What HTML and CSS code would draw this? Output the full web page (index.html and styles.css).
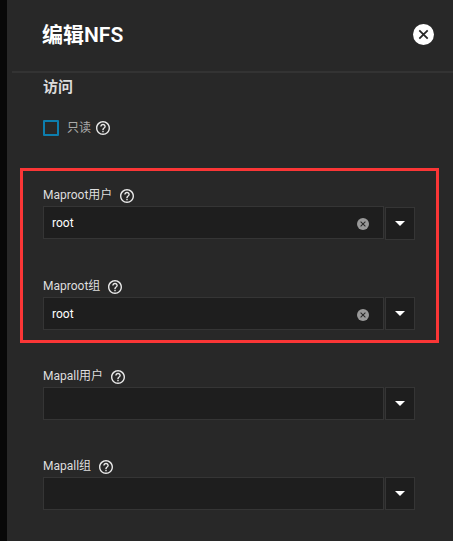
FILE: index.html
```html
<!DOCTYPE html>
<html lang="zh-CN">
<head>
<meta charset="utf-8">
<title>编辑NFS</title>
<link rel="stylesheet" href="styles.css">
</head>
<body>
<svg class="defs" aria-hidden="true">
  <symbol id="help" viewBox="2 2 20 20"><path d="M11 18h2v-2h-2v2zm1-16C6.48 2 2 6.48 2 12s4.48 10 10 10 10-4.48 10-10S17.52 2 12 2zm0 18c-4.41 0-8-3.59-8-8s3.59-8 8-8 8 3.59 8 8-3.59 8-8 8zm0-14c-2.21 0-4 1.79-4 4h2c0-1.1.9-2 2-2s2 .9 2 2c0 2-3 1.75-3 5h2c0-2.25 3-2.5 3-5 0-2.21-1.79-4-4-4z"/></symbol>
  <symbol id="cancel" viewBox="0 0 20 20"><circle cx="10" cy="10" r="10"/><path class="cross" d="M6 6l8 8M14 6l-8 8"/></symbol>
  <symbol id="caret" viewBox="0 0 10 5"><path d="M0 0h10L5 5z"/></symbol>
</svg>
<main class="panel">
  <header class="header">
    <h1 class="title">编辑NFS</h1>
    <svg class="close"><use href="#cancel"/></svg>
  </header>
  <h2 class="section">访问</h2>
  <div class="check">
    <span class="box"></span>
    <span class="check-label">只读</span>
    <svg class="help"><use href="#help"/></svg>
  </div>
  <div class="fields highlighted">
    <div class="field">
      <div class="label"><span>Maproot用户</span><svg class="help"><use href="#help"/></svg></div>
      <div class="combo">
        <div class="input"><span>root</span><svg class="clear"><use href="#cancel"/></svg></div>
        <div class="toggle toggle-low"><svg class="caret"><use href="#caret"/></svg></div>
      </div>
    </div>
    <div class="field">
      <div class="label"><span>Maproot组</span><svg class="help"><use href="#help"/></svg></div>
      <div class="combo">
        <div class="input"><span>root</span><svg class="clear"><use href="#cancel"/></svg></div>
        <div class="toggle"><svg class="caret"><use href="#caret"/></svg></div>
      </div>
    </div>
  </div>
  <div class="fields">
    <div class="field">
      <div class="label"><span>Mapall用户</span><svg class="help"><use href="#help"/></svg></div>
      <div class="combo">
        <div class="input"></div>
        <div class="toggle"><svg class="caret"><use href="#caret"/></svg></div>
      </div>
    </div>
    <div class="field">
      <div class="label"><span>Mapall组</span><svg class="help"><use href="#help"/></svg></div>
      <div class="combo">
        <div class="input"></div>
        <div class="toggle"><svg class="caret"><use href="#caret"/></svg></div>
      </div>
    </div>
  </div>
</main>
</body>
</html>
```
FILE: styles.css
```css
* { box-sizing: border-box; }

body {
  margin: 0;
  height: 541px;
  overflow: hidden;
  background: #080808;
  color: #fff;
  font: 12px/16px Roboto, "Noto Sans CJK SC", sans-serif;
}

svg { display: block; flex: none; fill: currentColor; }
.defs { display: none; }
.cross { fill: none; stroke: #282828; stroke-width: 1.7; }

.panel {
  height: 541px;
  margin-left: 7px;
  background: #282828;
}

.header {
  display: flex;
  align-items: center;
  justify-content: space-between;
  height: 73px;
  margin-left: 5px;
  padding: 0 19px 2px 30px;
  border-bottom: 2px solid #333;
}

.title {
  margin: 0;
  font-size: 21px;
  line-height: 28px;
  font-weight: 600;
}

.close { width: 21px; height: 21px; }

.section {
  margin: 4px 0 0 36px;
  font-size: 15px;
  line-height: 20px;
  font-weight: 600;
  color: #dcdcdc;
}

.check {
  display: flex;
  align-items: center;
  height: 16px;
  margin: 23px 0 0 36px;
}

.box {
  width: 16px;
  height: 16px;
  border: 2px solid #0d7eae;
  border-radius: 1px;
}

.check-label { margin: 0 5px 0 8px; color: #aaa; }
.help { width: 14px; height: 14px; color: #e8e8e8; }

.fields {
  width: 419px;
  margin-left: 13px;
  padding: 24px 23px 0;
}

.highlighted {
  height: 175px;
  margin-top: 32px;
  padding: 15px 21px 0 20px;
  border: 3px solid #fa3636;
}

.field { height: 90px; }
.highlighted .field:first-child { height: 91px; }

.label {
  display: flex;
  align-items: center;
  gap: 8px;
  height: 17px;
  color: #dedede;
}

.label .help { margin-top: 2px; }

.combo {
  display: flex;
  gap: 1px;
  width: 372px;
  margin-top: 3px;
}

.input {
  display: flex;
  align-items: center;
  justify-content: space-between;
  width: 341px;
  height: 33px;
  padding: 0 14px 0 8px;
  border: 1px solid #353535;
  background: #1e1e1e;
}

.clear { width: 12px; height: 12px; margin-top: 3px; color: #999; }

.toggle {
  display: grid;
  place-items: center;
  width: 30px;
  height: 33px;
  border: 1px solid #353535;
  background: #1e1e1e;
}

.toggle-low { margin-top: 1px; }
.caret { width: 10px; height: 5px; }
```
